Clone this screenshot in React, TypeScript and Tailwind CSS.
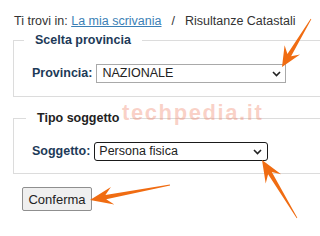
import React from "react";

type Pt = [number, number];

// tapered arrow polygon from tail to tip
function arrowPoints(tail: Pt, tip: Pt, headLen = 18, headHalf = 8, neck = 2) {
  const dx = tip[0] - tail[0];
  const dy = tip[1] - tail[1];
  const len = Math.hypot(dx, dy);
  const ux = dx / len;
  const uy = dy / len;
  const nx = -uy;
  const ny = ux;
  const N: Pt = [tip[0] - ux * headLen * 0.7, tip[1] - uy * headLen * 0.7];
  const B: Pt = [tip[0] - ux * headLen, tip[1] - uy * headLen];
  const pts: Pt[] = [
    [tail[0] + nx * 0.4, tail[1] + ny * 0.4],
    [N[0] + nx * neck, N[1] + ny * neck],
    [B[0] + nx * headHalf, B[1] + ny * headHalf],
    tip,
    [B[0] - nx * headHalf, B[1] - ny * headHalf],
    [N[0] - nx * neck, N[1] - ny * neck],
    [tail[0] - nx * 0.4, tail[1] - ny * 0.4],
  ];
  return pts.map((p) => `${p[0].toFixed(1)},${p[1].toFixed(1)}`).join(" ");
}

function Chevron() {
  return (
    <svg width="9" height="6" viewBox="0 0 9 6" className="shrink-0">
      <path d="M1 1 L4.5 4.5 L8 1" fill="none" stroke="#222" strokeWidth="1.6" />
    </svg>
  );
}

export default function App() {
  return (
    <div
      className="relative w-[320px] h-[236px] overflow-hidden bg-white text-[12.5px] leading-[15px] text-[#333]"
      style={{ fontFamily: '"Liberation Sans", Arial, sans-serif' }}
    >
      {/* breadcrumb */}
      <div className="pt-[14px] pl-[14px] whitespace-nowrap">
        Ti trovi in: <span className="text-[#3b7fb6] underline">La mia scrivania</span>
        <span className="mx-[10px]">/</span>
        Risultanze Catastali
      </div>

      {/* fieldset provincia */}
      <fieldset className="mt-[4px] ml-[13px] w-[330px] border border-[#dcdcdc] pl-[18px] pt-[16px] pb-[13px]">
        <legend className="-ml-[8px] px-[11px] font-bold text-[#1d3a58]">Scelta provincia</legend>
        <div className="flex items-center gap-[4px]">
          <span className="font-bold text-[#1d3a58]">Provincia:</span>
          <div className="flex h-[19px] w-[190px] items-center justify-between border border-[#a9a9a9] bg-white pl-[5px] pr-[4px] text-[#222]">
            <span>NAZIONALE</span>
            <Chevron />
          </div>
        </div>
      </fieldset>

      {/* fieldset soggetto */}
      <fieldset className="mt-[14px] ml-[13px] w-[330px] border border-[#dcdcdc] pl-[18px] pt-[16px] pb-[12px]">
        <legend className="-ml-[6px] px-[11px] font-bold text-[#222]">Tipo soggetto</legend>
        <div className="flex items-center gap-[4px]">
          <span className="font-bold text-[#1d3a58]">Soggetto:</span>
          <div className="flex h-[19px] w-[174px] items-center justify-between rounded-[3px] border border-[#1a1a1a] bg-white pl-[4px] pr-[5px] text-[#222]">
            <span>Persona fisica</span>
            <Chevron />
          </div>
        </div>
      </fieldset>

      <button className="mt-[13px] ml-[22px] h-[24px] w-[70px] rounded-[2px] border border-[#8f8f8f] bg-[#efefef] text-[13px] text-[#222]">
        Conferma
      </button>

      {/* watermark */}
      <div className="pointer-events-none absolute left-[122px] top-[102px] text-[22px] leading-[22px] font-bold tracking-[1.6px] text-[#f07a5e]/35">
        techpedia.it
      </div>

      {/* arrows */}
      <svg className="pointer-events-none absolute left-0 top-0" width="320" height="236">
        <polygon points={arrowPoints([311, 19], [282, 67], 20, 9, 2.2)} fill="#f06c12" />
        <polygon points={arrowPoints([297, 218], [262, 160], 22, 9, 2.2)} fill="#f06c12" />
        <polygon points={arrowPoints([170, 185], [90, 200], 23, 9, 2.2)} fill="#f06c12" />
      </svg>
    </div>
  );
}
